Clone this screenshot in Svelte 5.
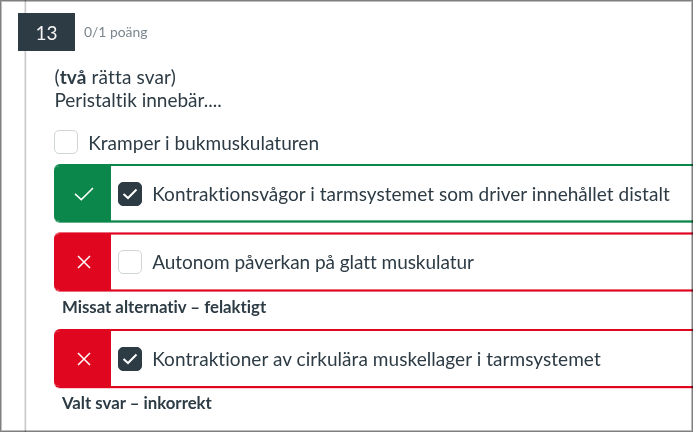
<script>
  const answers = [
    { text: 'Kramper i bukmuskulaturen', checked: false, tracking: 0.04 },
    { text: 'Kontraktionsvågor i tarmsystemet som driver innehållet distalt', checked: true, state: 'correct', tracking: 0.03 },
    { text: 'Autonom påverkan på glatt muskulatur', checked: false, state: 'wrong', note: 'Missat alternativ – felaktigt', tracking: -0.05 },
    { text: 'Kontraktioner av cirkulära muskellager i tarmsystemet', checked: true, state: 'wrong', note: 'Valt svar – inkorrekt', tracking: 0.055 },
  ];
</script>

<main>
  <div class="rail"></div>
  <header>
    <span class="number">13</span>
    <span class="points">0/1 poäng</span>
  </header>
  <section>
    <p class="question"><span class="hint">(<b>två</b> rätta svar)</span><br />Peristaltik innebär....</p>
    {#each answers as answer}
      <div class="answer {answer.state ?? 'plain'}" class:chosen={answer.state === 'wrong' && answer.checked}>
        {#if answer.state}
          <div class="status">
            {#if answer.state === 'correct'}
              <svg width="20" height="14" viewBox="0 0 20 14"><path d="M1 6.9 7.3 12.6 19 1" /></svg>
            {:else}
              <svg width="14" height="14" viewBox="0 0 14 14"><path d="M1 1 13 13M13 1 1 13" /></svg>
            {/if}
          </div>
        {/if}
        <div class="box" class:checked={answer.checked}>
          {#if answer.checked}
            <svg width="16" height="12" viewBox="0 0 16 12"><path d="M1.5 5.9 6 10 14.5 1.5" /></svg>
          {/if}
        </div>
        <span class="label" style="letter-spacing: {answer.tracking}px">{answer.text}</span>
      </div>
      {#if answer.note}
        <div class="note">{answer.note}</div>
      {/if}
    {/each}
  </section>
  <div class="frame"></div>
</main>

<style>
  main {
    position: relative;
    box-sizing: border-box;
    width: 693px;
    height: 432px;
    padding-top: 13px;
    overflow: hidden;
    background: #fff;
    color: #2d3b45;
    font-family: Lato, sans-serif;
    font-size: 19px;
    font-variant-ligatures: none;
  }
  .rail {
    position: absolute;
    top: 0;
    bottom: 0;
    left: 24px;
    width: 3px;
    background: linear-gradient(90deg, #e6e6e6 1px, #c8c8c8 1px 2px, #f6f6f6 2px);
  }
  header {
    position: relative;
    display: flex;
    align-items: center;
    height: 38px;
    margin-left: 18px;
  }
  .number {
    width: 57px;
    height: 38px;
    background: #2d3b45;
    color: #f5f5f5;
    line-height: 39px;
    text-align: center;
  }
  .points {
    margin-left: 9px;
    color: #7b868d;
    font-size: 13.9px;
    line-height: 16px;
  }
  section {
    padding: 14px 0 0 54.4px;
  }
  .question {
    margin: 0 0 19px;
    line-height: 23px;
  }
  .hint {
    letter-spacing: 0.15px;
  }
  .answer {
    display: flex;
    align-items: center;
    box-sizing: border-box;
    height: 58px;
    white-space: nowrap;
  }
  .plain {
    height: 24px;
    margin-bottom: 10px;
  }
  .correct {
    --tone: #0b874b;
    --soft: #0b874ba6;
    margin-bottom: 11px;
    border-width: 2px 0 1px;
    box-shadow: inset 0 -1px var(--soft), 0 1px var(--soft);
  }
  .wrong {
    --tone: #e0061f;
    --soft: #e0061f99;
    border-width: 1px 0;
    box-shadow: inset 0 1px var(--soft), inset 0 -1px var(--soft), 0 -1px var(--soft), 0 1px var(--soft);
  }
  .wrong .label {
    margin-top: -1px;
  }
  .chosen {
    height: 59px;
    border-width: 2px 0;
    box-shadow: 0 1px #e0061f33;
  }
  .correct,
  .wrong {
    border-style: solid;
    border-color: var(--tone);
    border-radius: 6px 0 0 6px;
    overflow: hidden;
  }
  .status {
    display: flex;
    align-items: center;
    justify-content: center;
    align-self: stretch;
    flex: none;
    width: 57px;
    margin-right: 7px;
    padding-left: 2px;
    box-sizing: border-box;
    background: var(--tone);
  }
  svg {
    fill: none;
    stroke: #fff;
    stroke-width: 1.5;
  }
  .box {
    display: flex;
    align-items: center;
    justify-content: center;
    flex: none;
    box-sizing: border-box;
    width: 24px;
    height: 24px;
    margin-right: 9.8px;
    border: 1px solid #cfd4d7;
    border-radius: 5px;
  }
  .checked {
    border-color: #2d3b45;
    background: #2d3b45;
  }
  .checked svg {
    stroke-width: 2;
  }
  .note {
    height: 38px;
    padding-left: 7.5px;
    font-size: 16.8px;
    font-weight: 700;
    line-height: 31px;
  }
  .chosen + .note {
    line-height: 29px;
  }
  .frame {
    position: absolute;
    inset: 0;
    border: 1px solid #808080;
    box-shadow: inset 0 0 0 1px #bdbdbd;
    mix-blend-mode: multiply;
    pointer-events: none;
  }
</style>
